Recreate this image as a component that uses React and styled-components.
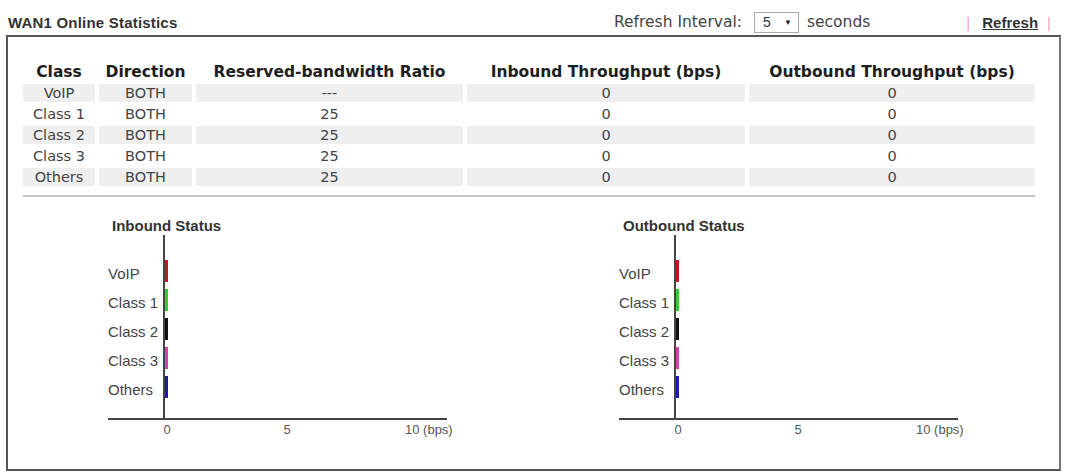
import React from 'react'
import styled, { createGlobalStyle } from 'styled-components'

const GlobalStyle = createGlobalStyle`
  html, body {
    margin: 0;
    padding: 0;
    background: #ffffff;
  }
  body {
    font-family: "Liberation Sans", Arial, sans-serif;
    color: #333;
  }
`

const Page = styled.div`
  width: 1065px;
  height: 473px;
  overflow: hidden;
`

const TopBar = styled.div`
  display: flex;
  align-items: center;
  height: 24px;
  margin-top: 10px;
  padding-left: 8px;
  padding-right: 14px;
`

const Title = styled.div`
  font-family: "Liberation Sans", Arial, sans-serif;
  font-weight: bold;
  font-size: 15px;
  letter-spacing: 0.2px;
  color: #333;
`

const RefreshGroup = styled.div`
  display: flex;
  align-items: center;
  margin-left: auto;
  font-family: "DejaVu Sans", Tahoma, sans-serif;
  font-size: 15.5px;
  color: #444;
`

const Label = styled.span`
  margin-right: ${p => p.$gap || 0}px;
`

const SelectBox = styled.div`
  display: flex;
  align-items: center;
  justify-content: space-between;
  box-sizing: border-box;
  width: 45px;
  height: 21px;
  padding: 0 6px 0 8px;
  border: 1px solid #a9a9a9;
  margin-right: 8px;
  font-family: "Liberation Sans", Arial, sans-serif;
  font-size: 14px;
  color: #333;
`

const Caret = styled.span`
  font-size: 8px;
  color: #222;
`

const Pipe = styled.span`
  color: #e9a3b6;
  font-family: "Liberation Sans", Arial, sans-serif;
  font-size: 15px;
  margin: 0 ${p => p.$right || 0}px 0 ${p => p.$left || 0}px;
`

const RefreshLink = styled.a`
  font-family: "Liberation Sans", Arial, sans-serif;
  font-weight: bold;
  font-size: 15px;
  color: #333;
  text-decoration: underline;
  cursor: pointer;
`

const Panel = styled.div`
  box-sizing: border-box;
  width: 1055px;
  height: 436px;
  margin: 1px 0 0 6px;
  border: 2px solid #555;
  border-right-color: #777;
  padding: 26px 0 0 15px;
`

const StatTable = styled.div`
  display: grid;
  grid-template-columns: 72px 93px 267px 278px 286px;
  grid-auto-rows: 18px;
  column-gap: 4px;
  row-gap: 3px;
  width: 1012px;
  font-family: "DejaVu Sans", Tahoma, Verdana, sans-serif;
  font-size: 14.5px;
`

const HeadCell = styled.div`
  text-align: center;
  line-height: 18px;
  font-size: 15.5px;
  font-weight: bold;
  color: #1e1e1e;
  white-space: nowrap;
`

const Cell = styled.div`
  text-align: center;
  line-height: 18px;
  color: #444;
  background: ${p => (p.$shaded ? '#efefef' : 'transparent')};
  white-space: nowrap;
`

const Divider = styled.div`
  width: 1012px;
  height: 2px;
  margin-top: 9px;
  background: #c4c4c4;
`

const ChartsRow = styled.div`
  display: flex;
  gap: 166px;
  margin-top: 20px;
  padding-left: 85px;
`

const Chart = styled.div`
  width: 345px;
`

const ChartTitle = styled.div`
  height: 18px;
  line-height: 18px;
  padding-left: 4px;
  font-family: "Liberation Sans", Arial, sans-serif;
  font-weight: bold;
  font-size: 15px;
  color: #333;
`

const Plot = styled.div`
  display: flex;
  width: 339px;
  height: 183px;
  border-bottom: 2px solid #444;
`

const LabelCol = styled.div`
  display: flex;
  flex-direction: column;
  gap: 7px;
  width: 55px;
  box-sizing: border-box;
  padding: 25px 0 0 0;
`

const BarLabel = styled.div`
  height: 22px;
  line-height: 22px;
  padding-top: 3px;
  box-sizing: border-box;
  text-align: left;
  font-family: "Liberation Sans", Arial, sans-serif;
  font-size: 15px;
  color: #444;
  white-space: nowrap;
`

const BarCol = styled.div`
  display: flex;
  flex-direction: column;
  gap: 7px;
  flex: 1;
  padding-top: 25px;
  border-left: 2px solid #444;
`

const Bar = styled.div`
  width: 3px;
  height: 22px;
  background: ${p => p.$color};
`

const Ticks = styled.div`
  position: relative;
  height: 16px;
  font-family: "Liberation Sans", Arial, sans-serif;
  font-size: 13px;
  color: #555;
`

const Tick = styled.span`
  position: absolute;
  top: 2px;
  white-space: nowrap;
  transform: ${p => (p.$center ? 'translateX(-50%)' : 'none')};
`

const columns = [
  'Class',
  'Direction',
  'Reserved-bandwidth Ratio',
  'Inbound Throughput (bps)',
  'Outbound Throughput (bps)',
]

const rows = [
  ['VoIP', 'BOTH', '---', '0', '0'],
  ['Class 1', 'BOTH', '25', '0', '0'],
  ['Class 2', 'BOTH', '25', '0', '0'],
  ['Class 3', 'BOTH', '25', '0', '0'],
  ['Others', 'BOTH', '25', '0', '0'],
]

const series = [
  { name: 'VoIP', color: '#c4161f' },
  { name: 'Class 1', color: '#3cc43c' },
  { name: 'Class 2', color: '#111111' },
  { name: 'Class 3', color: '#cc44b0' },
  { name: 'Others', color: '#1c1ca8' },
]

const ticks = [
  { value: 0, text: '0', center: true },
  { value: 5, text: '5', center: true },
  { value: 10, text: '10 (bps)', center: false },
]

// x position of a tick from its value, 0 sits just right of the y axis
const tickLeft = (t) => (t.center ? 59 + t.value * 24 : 59 + t.value * 24 - 2)

function StatusChart({ title }) {
  return (
    <Chart>
      <ChartTitle>{title}</ChartTitle>
      <Plot>
        <LabelCol>
          {series.map(s => <BarLabel key={s.name}>{s.name}</BarLabel>)}
        </LabelCol>
        <BarCol>
          {series.map(s => <Bar key={s.name} $color={s.color} />)}
        </BarCol>
      </Plot>
      <Ticks>
        {ticks.map(t => (
          <Tick key={t.text} $center={t.center} style={{ left: tickLeft(t) }}>
            {t.text}
          </Tick>
        ))}
      </Ticks>
    </Chart>
  )
}

export default function App() {
  return (
    <Page>
      <GlobalStyle />
      <TopBar>
        <Title>WAN1 Online Statistics</Title>
        <RefreshGroup>
          <Label $gap={12}>Refresh Interval:</Label>
          <SelectBox>
            <span>5</span>
            <Caret>▼</Caret>
          </SelectBox>
          <Label>seconds</Label>
          <Pipe $left={96} $right={12}>|</Pipe>
          <RefreshLink>Refresh</RefreshLink>
          <Pipe $left={9}>|</Pipe>
        </RefreshGroup>
      </TopBar>
      <Panel>
        <StatTable>
          {columns.map(c => <HeadCell key={c}>{c}</HeadCell>)}
          {rows.map((r, i) =>
            r.map((v, j) => (
              <Cell key={i + '-' + j} $shaded={i % 2 === 0}>{v}</Cell>
            ))
          )}
        </StatTable>
        <Divider />
        <ChartsRow>
          <StatusChart title="Inbound Status" />
          <StatusChart title="Outbound Status" />
        </ChartsRow>
      </Panel>
    </Page>
  )
}
